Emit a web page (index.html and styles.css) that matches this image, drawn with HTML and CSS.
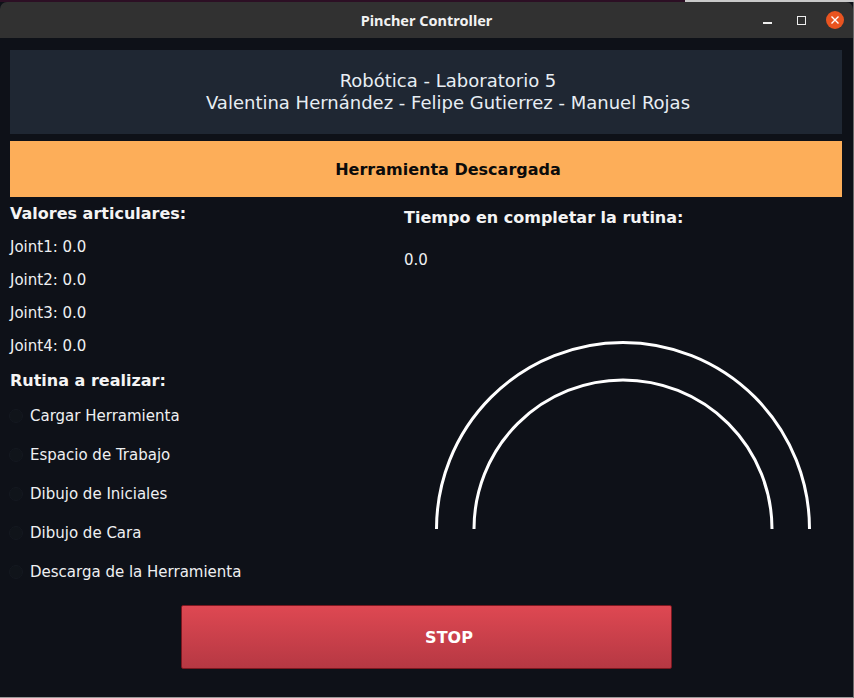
FILE: index.html
```html
<!DOCTYPE html>
<html lang="es">
<head>
<meta charset="utf-8">
<title>Pincher Controller</title>
<link rel="stylesheet" href="styles.css">
</head>
<body>
<div class="desktop-strip"><div class="strip-right"></div></div>
<div class="window">
  <div class="titlebar">
    <span class="title">Pincher Controller</span>
    <div class="controls">
      <span class="btn-min"></span>
      <span class="btn-max"></span>
      <span class="btn-close">
        <svg width="18" height="18" viewBox="0 0 18 18"><circle cx="9" cy="9" r="9" fill="#e95420"/><path d="M5.5 5.5 L12.5 12.5 M12.5 5.5 L5.5 12.5" stroke="#ffffff" stroke-width="1.4"/></svg>
      </span>
    </div>
  </div>
  <div class="content">
    <div class="header">
      <div>Robótica - Laboratorio 5</div>
      <div>Valentina Hernández - Felipe Gutierrez - Manuel Rojas</div>
    </div>
    <div class="status">Herramienta Descargada</div>
    <div class="main">
      <div class="left">
        <div class="section-title first">Valores articulares:</div>
        <div class="joint">Joint1: 0.0</div>
        <div class="joint">Joint2: 0.0</div>
        <div class="joint">Joint3: 0.0</div>
        <div class="joint">Joint4: 0.0</div>
        <div class="section-title second">Rutina a realizar:</div>
        <label class="radio"><span class="dot"></span>Cargar Herramienta</label>
        <label class="radio"><span class="dot"></span>Espacio de Trabajo</label>
        <label class="radio"><span class="dot"></span>Dibujo de Iniciales</label>
        <label class="radio"><span class="dot"></span>Dibujo de Cara</label>
        <label class="radio"><span class="dot"></span>Descarga de la Herramienta</label>
      </div>
      <div class="right">
        <div class="section-title time">Tiempo en completar la rutina:</div>
        <div class="time-value">0.0</div>
        <svg class="arcs" width="380" height="192" viewBox="0 0 380 192">
          <path d="M2.5 190 A186.5 186.5 0 0 1 375.5 190" fill="none" stroke="#ffffff" stroke-width="3"/>
          <path d="M40 190 A149 149 0 0 1 338 190" fill="none" stroke="#ffffff" stroke-width="3"/>
        </svg>
      </div>
    </div>
    <div class="actions">
      <button class="stop">STOP</button>
    </div>
  </div>
</div>
</body>
</html>
```
FILE: styles.css
```css
html, body {
  margin: 0;
  padding: 0;
  width: 854px;
  height: 698px;
  overflow: hidden;
  background: #2c0f24;
}

.desktop-strip {
  height: 2px;
  display: flex;
  justify-content: flex-end;
}

.strip-right {
  width: 169px;
  background: #c9c9c9;
}

.window {
  width: 853px;
  height: 695px;
  border-right: 1px solid #6b6b6b;
  border-bottom: 1px solid #9a9a9a;
  display: flex;
  flex-direction: column;
  background: #0e1118;
}

.titlebar {
  height: 36px;
  background: #313131;
  border-radius: 7px 7px 0 0;
  display: flex;
  align-items: center;
  justify-content: center;
  position: relative;
  flex-shrink: 0;
}

.title {
  font-family: "Noto Sans", "DejaVu Sans", sans-serif;
  font-weight: 700;
  font-size: 14.5px;
  color: #f2f2f2;
}

.controls {
  position: absolute;
  right: 9px;
  top: 9px;
  display: flex;
  align-items: center;
}

.btn-min {
  width: 9px;
  height: 1.5px;
  background: #eeeeee;
  margin-top: 6px;
  margin-right: 25px;
}

.btn-max {
  width: 7px;
  height: 7px;
  border: 1.2px solid #eeeeee;
  margin-right: 20px;
}

.btn-close {
  display: block;
  width: 18px;
  height: 18px;
}

.btn-close svg {
  display: block;
}

.content {
  flex: 1;
  padding: 12px 11px 0 10px;
  font-family: "DejaVu Sans", sans-serif;
  color: #eef0f2;
}

.header {
  height: 84px;
  background: #1f2733;
  display: flex;
  flex-direction: column;
  align-items: center;
  justify-content: center;
  font-size: 18px;
  line-height: 22px;
  color: #e8eef4;
  padding-left: 44px;
}

.status {
  margin-top: 7px;
  height: 56px;
  background: #fdae59;
  color: #0b0b0b;
  font-weight: 700;
  font-size: 16px;
  display: flex;
  align-items: center;
  justify-content: center;
  padding-left: 44px;
}

.main {
  display: grid;
  grid-template-columns: 394px 1fr;
}

.section-title {
  font-weight: 700;
  font-size: 16px;
  color: #f4f4f4;
}

.section-title.first {
  height: 34px;
  line-height: 33px;
}

.section-title.second {
  height: 33px;
  line-height: 36px;
}

.joint {
  height: 33px;
  line-height: 33px;
  font-size: 15px;
}

.radio {
  display: flex;
  align-items: center;
  height: 39px;
  font-size: 15px;
}

.dot {
  width: 12px;
  height: 12px;
  border-radius: 50%;
  background: #10141a;
  border: 1px solid #141820;
  margin-right: 7px;
  margin-left: -1px;
}

.section-title.time {
  height: 40px;
  line-height: 41px;
}

.time-value {
  height: 44px;
  line-height: 47px;
  font-size: 15px;
}

.arcs {
  display: block;
  margin-top: 58px;
  margin-left: 30px;
}

.actions {
  display: flex;
  justify-content: center;
  margin-top: 14px;
}

.stop {
  width: 491px;
  height: 64px;
  border: 1px solid #7c1820;
  border-radius: 2px;
  background: linear-gradient(#de4852, #b63843);
  color: #ffffff;
  font-family: "DejaVu Sans", sans-serif;
  font-weight: 700;
  font-size: 16px;
  padding-left: 52px;
}
```
